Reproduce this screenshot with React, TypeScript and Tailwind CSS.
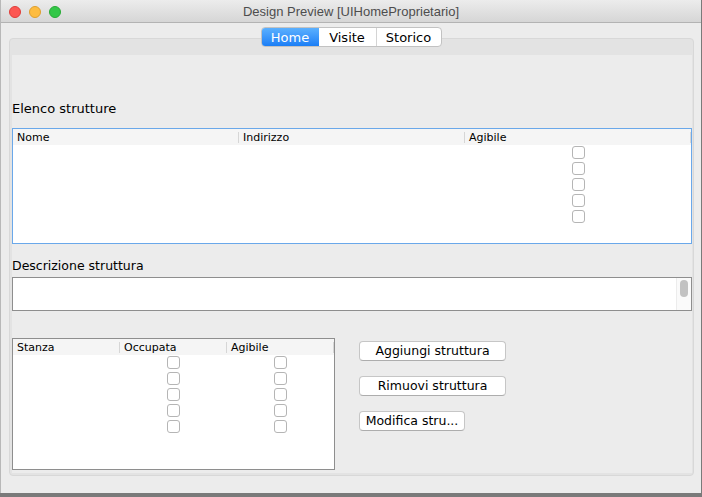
import React from 'react';

const ui = { fontFamily: '"DejaVu Sans", "Liberation Sans", sans-serif' };

const Checkbox: React.FC = () => (
  <div className="w-[13px] h-[13px] rounded-[3px] border border-[#b5b5b5] bg-white" />
);

interface TableProps {
  columns: string[];
  checkCols: number[];
  rows: number;
  focused?: boolean;
  className: string;
}

const Table: React.FC<TableProps> = ({ columns, checkCols, rows, focused, className }) => (
  <div className={`${className} bg-white border ${focused ? 'border-[#6aa8ea]' : 'border-[#8e8e8e]'} flex flex-col`}>
    <div className="h-[16px] bg-[#f5f5f5] flex">
      {columns.map((c) => (
        <div key={c} className="flex-1 flex items-center">
          <span className="flex-1 pl-[4px] text-[11px] leading-none text-black" style={ui}>
            {c}
          </span>
          <div className="w-px h-[11px] bg-[#d6d6d6]" />
        </div>
      ))}
    </div>
    <div className="flex">
      {columns.map((c, i) => (
        <div key={c} className="flex-1 flex flex-col items-center">
          {checkCols.includes(i) &&
            Array.from({ length: rows }, (_, r) => (
              <div key={r} className="h-[16px] pt-px">
                <Checkbox />
              </div>
            ))}
        </div>
      ))}
    </div>
  </div>
);

const Button: React.FC<{ label: string; w: string }> = ({ label, w }) => (
  <button
    className={`${w} h-[20px] bg-white rounded-[4px] border border-[#c6c6c6] border-b-[#adadad] text-[12.5px] leading-none text-black`}
    style={ui}
  >
    {label}
  </button>
);

export default function App() {
  return (
    <div className="w-[702px] h-[497px] bg-[#7a7a7a] overflow-hidden">
      <div className="w-[701px] h-[493px] bg-[#ececec] flex flex-col border-l border-[#b8b8b8]">
        {/* Title bar */}
        <div className="h-[23px] shrink-0 pt-[2px] bg-gradient-to-b from-[#ececec] to-[#d6d6d6] border-b border-[#b3b3b3] flex items-center relative">
          <div className="flex gap-[8px] pl-[8px]">
            <div className="w-[12px] h-[12px] rounded-full bg-[#fc5753] border border-[#df3d39]" />
            <div className="w-[12px] h-[12px] rounded-full bg-[#fdbc40] border border-[#de9f2e]" />
            <div className="w-[12px] h-[12px] rounded-full bg-[#33c748] border border-[#27aa35]" />
          </div>
          <div
            className="absolute inset-0 pt-[2px] flex items-center justify-center text-[13px] text-[#4d4d4d]"
            style={{ fontFamily: '"Liberation Sans", Arial, sans-serif' }}
          >
            Design Preview [UIHomeProprietario]
          </div>
        </div>

        {/* Body */}
        <div className="flex-1 pt-[4px] pl-[8px] pr-[7px] pb-[17px] flex flex-col">
          <div className="relative z-10 flex justify-center h-[20px] shrink-0 pr-[1px]">
            <div className="flex rounded-[4px] border border-[#c2c2c2] bg-white overflow-hidden text-[13px] leading-none" style={ui}>
              <div className="w-[57px] flex items-center justify-center text-white bg-gradient-to-b from-[#5bb0fe] to-[#1a7ef6]">
                Home
              </div>
              <div className="w-[58px] flex items-center justify-center text-black border-r border-[#d4d4d4]">
                Visite
              </div>
              <div className="w-[64px] flex items-center justify-center text-black">Storico</div>
            </div>
          </div>

          <div className="-mt-[9px] flex-1 rounded-[4px] border border-[#d8d8d8] bg-[#e3e3e3] pt-[16px] px-[2px] pb-[2px] flex">
            <div className="flex-1 bg-[#ececec] flex flex-col">
              <div className="mt-[46px] h-[16px] text-[13px] leading-[16px] text-black" style={ui}>
                Elenco strutture
              </div>
              <Table
                className="mt-[11px] w-[680px] h-[116px]"
                columns={['Nome', 'Indirizzo', 'Agibile']}
                checkCols={[2]}
                rows={5}
                focused
              />
              <div className="mt-[14px] h-[16px] text-[12.5px] leading-[16px] text-black" style={ui}>
                Descrizione struttura
              </div>
              <div className="mt-[3px] w-[680px] h-[34px] bg-white border border-[#8e8e8e] flex justify-end">
                <div className="w-[15px] border-l border-[#ececec] bg-[#fafafa] pt-[2px] flex justify-center">
                  <div className="w-[8px] h-[17px] rounded-full bg-[#c2c2c2]" />
                </div>
              </div>
              <div className="mt-[27px] flex">
                <Table
                  className="w-[323px] h-[132px]"
                  columns={['Stanza', 'Occupata', 'Agibile']}
                  checkCols={[1, 2]}
                  rows={5}
                />
                <div className="ml-[24px] mt-[3px] flex flex-col gap-[15px] items-start">
                  <Button label="Aggiungi struttura" w="w-[147px]" />
                  <Button label="Rimuovi struttura" w="w-[147px]" />
                  <Button label="Modifica stru..." w="w-[106px]" />
                </div>
              </div>
            </div>
          </div>
        </div>
      </div>
    </div>
  );
}
